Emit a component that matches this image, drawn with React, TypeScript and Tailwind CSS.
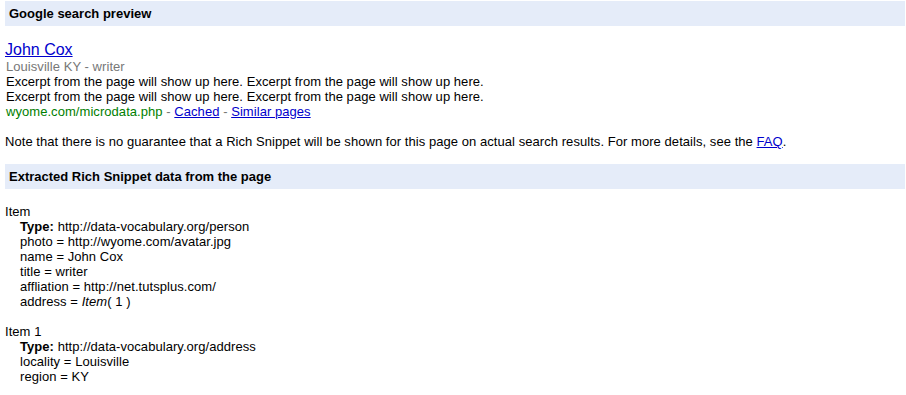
const personProps = [
  { key: 'photo', value: 'http://wyome.com/avatar.jpg' },
  { key: 'name', value: 'John Cox' },
  { key: 'title', value: 'writer' },
  { key: 'affliation', value: 'http://net.tutsplus.com/' },
];

const addressProps = [
  { key: 'locality', value: 'Louisville' },
  { key: 'region', value: 'KY' },
];

const excerpt = 'Excerpt from the page will show up here. Excerpt from the page will show up here.';

const SectionHeader = ({ children }: { children: React.ReactNode }) => (
  <div className="h-[25px] w-[900px] bg-[#e5ecf9] pl-[4px] text-[13px] leading-[25px] font-bold tracking-normal text-black">
    {children}
  </div>
);

const Link = ({ children, className = '' }: { children: React.ReactNode; className?: string }) => (
  <a href="#" className={`text-[#0000cc] underline ${className}`}>
    {children}
  </a>
);

const App = () => {
  return (
    <div className="min-h-screen bg-white pt-[1px] pl-[5px] font-['Liberation_Sans',Arial,sans-serif] text-[13px] leading-[15px] tracking-[0.055px] text-black">
      <SectionHeader>Google search preview</SectionHeader>

      <div className="mt-[14px]">
        <div className="text-[16px] leading-[19px] tracking-normal">
          <Link>John Cox</Link>
        </div>
        <div className="pl-[1px]">
          <div className="text-[#777777]">Louisville KY - writer</div>
          <div>{excerpt}</div>
          <div>{excerpt}</div>
          <div>
            <span className="text-[#008000]">wyome.com/microdata.php</span>
            <span className="text-[#777777]"> - </span>
            <Link>Cached</Link>
            <span className="text-[#777777]"> - </span>
            <Link>Similar pages</Link>
          </div>
        </div>
      </div>

      <p className="mt-[15px]">
        Note that there is no guarantee that a Rich Snippet will be shown for this page on actual search
        results. For more details, see the <Link>FAQ</Link>.
      </p>

      <div className="mt-[15px]">
        <SectionHeader>Extracted Rich Snippet data from the page</SectionHeader>
      </div>

      <div className="mt-[15px]">
        <div>Item</div>
        <div className="pl-[15px]">
          <div>
            <b>Type:</b> http://data-vocabulary.org/person
          </div>
          {personProps.map(p => (
            <div key={p.key}>
              {p.key} = {p.value}
            </div>
          ))}
          <div>
            address = <i>Item</i>( 1 )
          </div>
        </div>
      </div>

      <div className="mt-[15px]">
        <div>Item 1</div>
        <div className="pl-[15px]">
          <div>
            <b>Type:</b> http://data-vocabulary.org/address
          </div>
          {addressProps.map(p => (
            <div key={p.key}>
              {p.key} = {p.value}
            </div>
          ))}
        </div>
      </div>
    </div>
  );
};

export default App;
